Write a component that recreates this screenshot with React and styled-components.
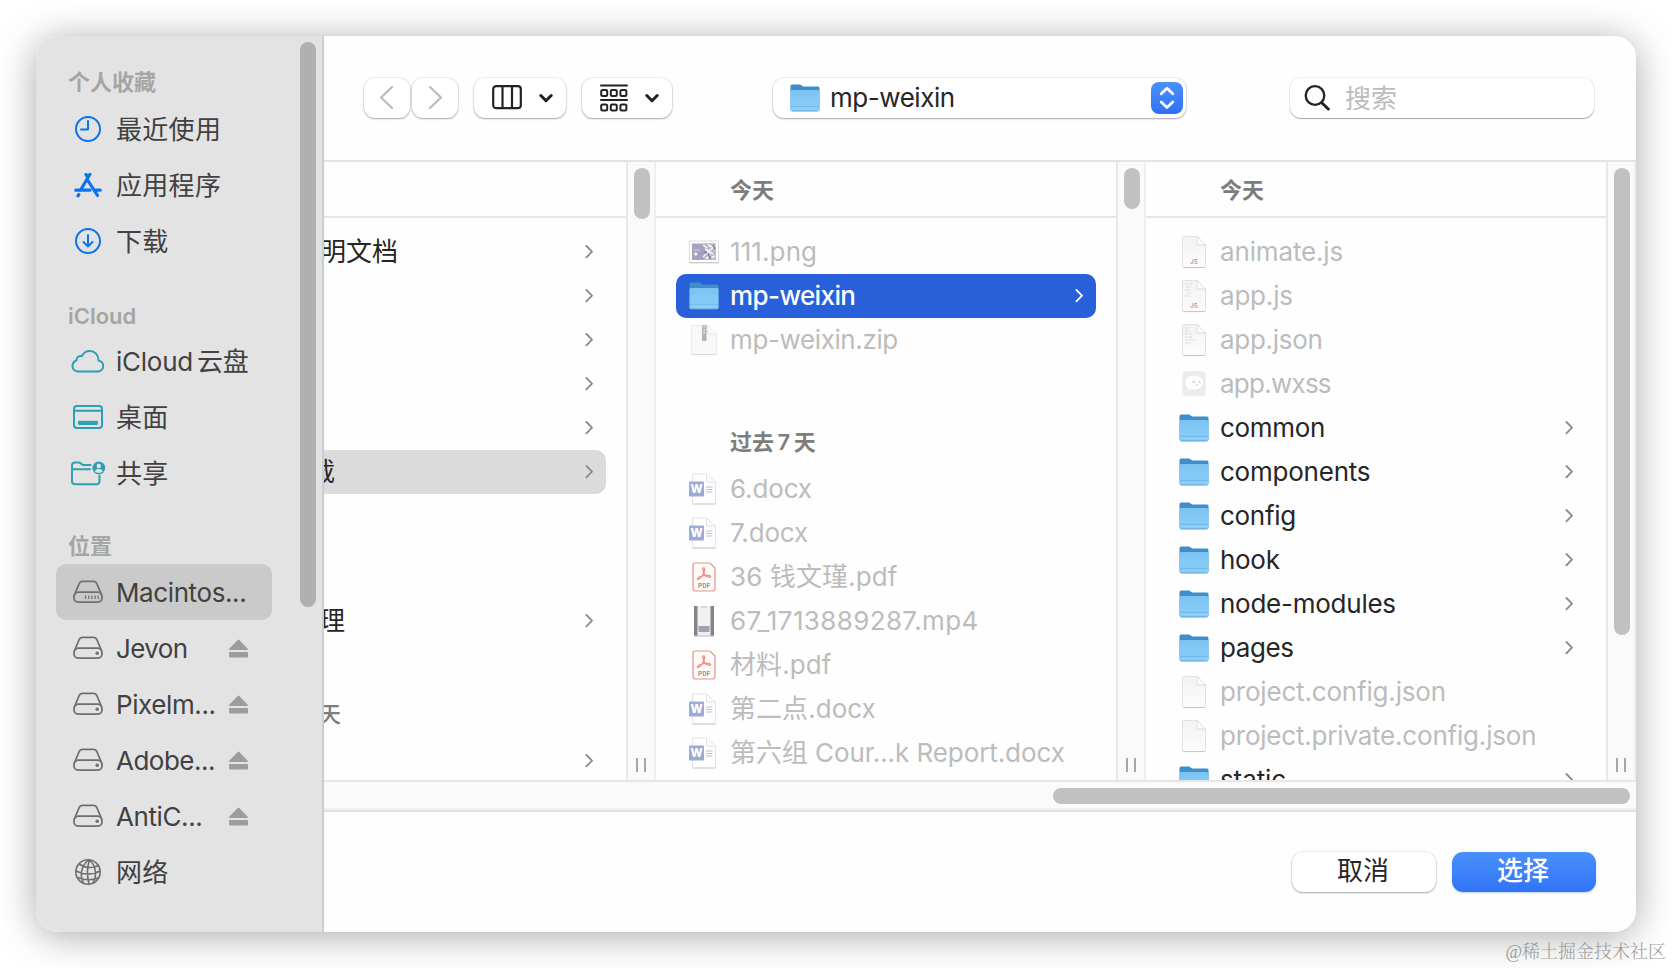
import React from "react";
import styled, { createGlobalStyle, css } from "styled-components";

const GlobalStyle = createGlobalStyle`
  * { box-sizing: border-box; }
  html, body { margin: 0; padding: 0; }
  body {
    width: 1672px;
    height: 968px;
    overflow: hidden;
    background: #fff;
    font-family: Inter, "Noto Sans CJK SC", sans-serif;
    font-size: 26px;
    color: #262626;
  }
  button, input { font: inherit; color: inherit; }
  svg { display: block; flex: none; }
`;

const Page = styled.div`
  position: relative;
  width: 1672px;
  height: 968px;
  padding: 36px;
`;

const Dialog = styled.div`
  display: flex;
  width: 1600px;
  height: 896px;
  border-radius: 22px;
  overflow: hidden;
  background: #fefefe;
`;

const Shadow = styled.div`
  border-radius: 22px;
  box-shadow: 0 4px 38px rgba(0, 0, 0, 0.34);
`;

/* ---------- sidebar ---------- */

const Sidebar = styled.aside`
  display: flex;
  justify-content: space-between;
  width: 288px;
  flex: none;
  background: #e3e3e3;
  border-right: 2px solid #cdcdcd;
`;

const SidebarList = styled.nav`
  width: 236px;
  padding-left: 20px;
`;

const SectionTitle = styled.div`
  display: flex;
  align-items: flex-end;
  height: ${(p) => p.$height}px;
  padding: 0 0 ${(p) => p.$bottom}px 12px;
  font-size: 22px;
  line-height: 30px;
  font-weight: 600;
  color: #a5a5a5;
`;

const SidebarItem = styled.div`
  display: flex;
  align-items: center;
  height: 56px;
  padding: 0 24px 0 14px;
  border-radius: 10px;
  background: ${(p) => (p.$active ? "#cacaca" : "transparent")};
  color: #414141;
`;

const SidebarIcon = styled.span`
  display: flex;
  justify-content: center;
  width: 36px;
  margin-right: 10px;
  flex: none;
`;

const SidebarLabel = styled.span`
  flex: 1;
  padding-top: 2px;
  white-space: nowrap;
  line-height: 36px;
  letter-spacing: ${(p) => p.$track || 0}px;
`;

const Suffix = styled.span`
  margin-left: 4px;
`;

const Thumb = styled.div`
  flex: none;
  width: 16px;
  height: ${(p) => p.$length}px;
  border-radius: 8px;
  background: ${(p) => p.$color || "#c1c1c1"};
`;

const SidebarScroll = styled.div`
  padding: 6px 6px 0 0;
`;

/* ---------- toolbar ---------- */

const Main = styled.main`
  display: flex;
  flex-direction: column;
  flex: 1;
  min-width: 0;
`;

const Toolbar = styled.header`
  display: flex;
  align-items: flex-start;
  height: 124px;
  padding: 42px 0 0 40px;
`;

const raised = css`
  border: none;
  border-radius: 11px;
  background: #fff;
  box-shadow: 0 0 0 1px rgba(0, 0, 0, 0.06), 0 1px 2px rgba(0, 0, 0, 0.3);
`;

const ToolButton = styled.button`
  ${raised}
  display: flex;
  align-items: center;
  justify-content: center;
  gap: 17px;
  width: ${(p) => p.$width}px;
  height: 40px;
  margin-right: ${(p) => p.$gap}px;
  padding: 0 0 0 ${(p) => p.$inset || 0}px;
`;

const PathPopup = styled.div`
  ${raised}
  display: flex;
  align-items: center;
  width: 413px;
  height: 40px;
  margin: 0 104px 0 101px;
  padding: 0 3px 0 17px;
`;

const PathName = styled.span`
  flex: 1;
  margin: -1px 0 0 10px;
  line-height: 36px;
  letter-spacing: -0.45px;
`;

const Stepper = styled.span`
  display: flex;
  align-items: center;
  justify-content: center;
  width: 32px;
  height: 32px;
  border-radius: 8px;
  background: linear-gradient(#4a91fb, #2f70f5);
`;

const SearchField = styled.div`
  ${raised}
  display: flex;
  align-items: center;
  width: 304px;
  height: 40px;
  padding-left: 14px;
  color: #bcbcbc;
  box-shadow: 0 0 0 1px rgba(0, 0, 0, 0.06), 0 1px 1px rgba(0, 0, 0, 0.3);
`;

const SearchHint = styled.span`
  margin-left: 15px;
  padding-top: 2px;
  line-height: 36px;
`;

/* ---------- browser ---------- */

const Browser = styled.section`
  display: flex;
  height: 622px;
  border-top: 2px solid #e3e3e3;
  border-bottom: 2px solid #e6e6e6;
`;

const Column = styled.div`
  width: ${(p) => p.$width}px;
  flex: none;
  height: 618px;
  overflow: hidden;
`;

const ColumnHeader = styled.div`
  height: 56px;
  padding: 13px 0 0 74px;
  margin-bottom: 12px;
  border-bottom: 2px solid #e6e6e6;
  font-size: 22px;
  font-weight: 600;
  line-height: 30px;
  color: #7d7d7d;
`;

const GroupHeader = styled.div`
  height: ${(p) => p.$height}px;
  padding: ${(p) => p.$top}px 0 0 ${(p) => (p.$clipped ? 0 : 74)}px;
  margin-left: ${(p) => (p.$clipped ? -5 : 0)}px;
  font-size: 22px;
  font-weight: ${(p) => (p.$clipped ? 500 : 600)};
  line-height: 30px;
  word-spacing: -2px;
  color: #7d7d7d;
`;

const FileRow = styled.div`
  display: flex;
  align-items: center;
  height: 44px;
  margin: 0 20px;
  padding: 0 13px;
  border-radius: 10px;
  background: ${(p) => (p.$selected ? "#2860d9" : "transparent")};
  color: ${(p) => (p.$selected ? "#fff" : p.$dim ? "#bcbcbc" : "#262626")};
  font-weight: ${(p) => (p.$selected ? 500 : 400)};
`;

const FileIcon = styled.span`
  display: flex;
  justify-content: center;
  width: 30px;
  margin-right: 11px;
  flex: none;
`;

const FileName = styled.span`
  flex: 1;
  white-space: nowrap;
  line-height: 36px;
  letter-spacing: ${(p) => p.$track}px;
`;

const ClippedRow = styled.div`
  display: flex;
  align-items: center;
  height: 44px;
  margin-right: 20px;
  padding-right: 13px;
  border-radius: 0 10px 10px 0;
  background: ${(p) => (p.$selected ? "#dbdbdb" : "transparent")};
`;

const ClippedName = styled.span`
  flex: 1;
  margin-left: ${(p) => p.$shift}px;
  line-height: 36px;
  white-space: nowrap;
`;

const Spacer = styled.div`
  height: ${(p) => p.$height}px;
`;

const Track = styled.div`
  display: flex;
  flex-direction: column;
  align-items: center;
  justify-content: space-between;
  width: 30px;
  flex: none;
  padding: 6px 0 8px 2px;
  background: #fafafa;
  border-left: 2px solid #e8e8e8;
  border-right: 2px solid #efefef;
`;

const Grip = styled.div`
  width: 10px;
  height: 14px;
  margin-right: 2px;
  border: solid #a6a6a6;
  border-width: 0 2px;
`;

const HorizontalTrack = styled.div`
  display: flex;
  justify-content: flex-end;
  height: 30px;
  padding: 6px 6px 0 0;
  background: #fafafa;
  border-bottom: 2px solid #e0e0e0;
  box-shadow: inset 0 -2px 0 #efefef;
`;

const HorizontalThumb = styled.div`
  width: 577px;
  height: 16px;
  border-radius: 8px;
  background: #c1c1c1;
`;

/* ---------- footer ---------- */

const Footer = styled.footer`
  display: flex;
  justify-content: flex-end;
  gap: 16px;
  padding: 40px 40px 0 0;
`;

const FooterButton = styled.button`
  ${raised}
  width: 144px;
  height: 40px;
  padding: 0 2px 2px 0;
  line-height: 36px;
  ${(p) =>
    p.$primary &&
    css`
      background: linear-gradient(#4a90fb, #3074f6);
      box-shadow: 0 1px 2px rgba(48, 116, 246, 0.3);
      color: #fff;
      font-weight: 500;
    `}
`;

const Watermark = styled.div`
  position: absolute;
  right: 6px;
  bottom: 4px;
  font-family: "Liberation Serif", "Noto Serif CJK SC", "Noto Sans CJK SC", serif;
  font-size: 18px;
  font-weight: 300;
  line-height: 24px;
  color: #9b9b9b;
`;

/* ---------- icons ---------- */

const line = { fill: "none", strokeLinecap: "round", strokeLinejoin: "round" };
const BLUE = "#0a74f0";
const TEAL = "#2f9fb3";
const GREY = "#6f6f6f";

const ClockIcon = () => (
  <svg width="28" height="28" viewBox="0 0 28 28" {...line} stroke={BLUE} strokeWidth="2">
    <circle cx="14" cy="14" r="12" />
    <path d="M14 6v8.500H7" />
  </svg>
);
const AppsIcon = () => (
  <svg width="28" height="26" viewBox="0 0 28 26" {...line} stroke={BLUE} strokeWidth="3.200">
    <path d="M15.800 2.500L7.500 16.500M12 2.500l2 3M14.500 9.500l9 14M1.800 18.200H16M21.500 18.200h4.700M4.800 22.500l-.8 1.300" />
  </svg>
);
const DownloadIcon = () => (
  <svg width="28" height="28" viewBox="0 0 28 28" {...line} stroke={BLUE} strokeWidth="2">
    <circle cx="14" cy="14" r="12" />
    <path d="M14 8v11M9.500 15l4.500 4.500 4.500-4.500" />
  </svg>
);
const CloudIcon = () => (
  <svg width="34" height="24" viewBox="0 0 34 24" {...line} stroke={TEAL} strokeWidth="2">
    <path d="M8 22.500h18.200c3.600 0 6-2.400 6-5.400 0-2.900-2-5-4.600-5.600C27.600 6 23.800 2 18.900 2c-3.700 0-6.500 1.900-8 5-3-.6-5.500 1.300-5.500 4.500C3 12.400 1.500 14.400 1.500 17c0 3.100 2.600 5.500 6.500 5.500z" />
  </svg>
);
const DesktopIcon = () => (
  <svg width="32" height="24" viewBox="0 0 32 24" {...line} stroke={TEAL} strokeWidth="2">
    <rect x="2" y="1" width="28" height="22" rx="3" />
    <path d="M2 5.800h28" />
    <rect x="6.500" y="16.300" width="19" height="3.200" rx=".6" fill={TEAL} strokeWidth="1" />
  </svg>
);
const SharedIcon = () => (
  <svg width="36" height="26" viewBox="0 0 36 26" {...line} stroke={TEAL} strokeWidth="2">
    <path d="M20.500 5h-6.800c-2.300 0-2.800-2.500-5-2.500H5C3.200 2.500 2 3.700 2 5.500v15.700c0 1.800 1.200 3 3 3h21.500c1.800 0 3-1.200 3-3v-5.500M2 9.300h18" />
    <circle cx="28.800" cy="8" r="6.400" fill={TEAL} stroke="none" />
    <circle cx="28.800" cy="6" r="2.200" fill="#e3e3e3" stroke="none" />
    <path d="M24.800 11.600c.6-2 2-2.700 4-2.700s3.400.7 4 2.700c-2 1.700-6 1.700-8 0z" fill="#e3e3e3" stroke="none" />
  </svg>
);
const DriveIcon = ({ vents }) => (
  <svg width="32" height="24" viewBox="0 0 32 24" {...line} stroke={GREY} strokeWidth="1.800">
    <path d="M2.400 15L7.200 3.500C7.800 2 8.800 1.400 10.200 1.400h11.600c1.400 0 2.400.6 3 2.100L29.600 15" />
    <rect x="2" y="12.200" width="28" height="10" rx="4.500" />
    {vents ? (
      <path d="M13.500 15.500v3.500M16.700 15.500v3.500M19.900 15.500v3.500M23.100 15.500v3.500M26.200 15.500v3.500" strokeWidth="1.200" strokeLinecap="butt" />
    ) : (
      <circle cx="25.200" cy="17.200" r="1.800" fill={GREY} stroke="none" />
    )}
  </svg>
);
const GlobeIcon = () => (
  <svg width="28" height="28" viewBox="0 0 28 28" {...line} stroke={GREY} strokeWidth="1.600">
    <circle cx="14" cy="14" r="12.200" />
    <path d="M14.500 2C7 8 5.500 18 9.500 25.300M15.500 2c-2.500 7-2.500 16-.5 24M15.500 2c6 5 8 15 3.500 23.300M5 6c6 4 13 4.500 19.500 1.500M2 13c7 3.800 17 4 24 0M3.500 19.500c6 2.500 14 3 20.500.5" />
  </svg>
);
const EjectIcon = () => (
  <svg width="19" height="19" viewBox="0 0 19 19" fill="#9d9d9d">
    <path d="M8.700.900q.8-.8 1.600 0l8.200 8.700q.9 1.400-.7 1.400H1.200Q-.4 11 .5 9.600z" />
    <rect x="0" y="13" width="19" height="5.500" rx="1" />
  </svg>
);

const BackIcon = () => (
  <svg width="16" height="24" viewBox="0 0 16 24" {...line} stroke="#bbb" strokeWidth="2.200">
    <path d="M13 1L2 11.500 13 22" />
  </svg>
);
const ForwardIcon = () => (
  <svg width="16" height="24" viewBox="0 0 16 24" {...line} stroke="#bbb" strokeWidth="2.200">
    <path d="M3 1L14 11.500 3 22" />
  </svg>
);
const DownChevron = () => (
  <svg width="14" height="10" viewBox="0 0 14 10" {...line} stroke="#222" strokeWidth="3">
    <path d="M1.800 2.500L7 7.800l5.200-5.300" />
  </svg>
);
const ColumnsIcon = () => (
  <svg width="30" height="26" viewBox="0 0 30 26" {...line} stroke="#222" strokeWidth="2.200">
    <rect x="1.200" y="1.200" width="27.600" height="22" rx="3" />
    <path d="M10.500 1.500v21.500M20 1.500v21.500" />
  </svg>
);
const GroupIcon = () => (
  <svg width="28" height="28" viewBox="0 0 28 28" {...line} stroke="#222" strokeWidth="2">
    <path d="M1 1.500h26M1 16h26" />
    {[1.2, 10.8, 20.4].map((x) => (
      <g key={x}>
        <rect x={x} y="6" width="6" height="6" rx="1.500" />
        <rect x={x} y="20.500" width="6" height="6" rx="1.500" />
      </g>
    ))}
  </svg>
);
const StepperIcon = () => (
  <svg width="16" height="24" viewBox="0 0 16 24" {...line} stroke="#fff" strokeWidth="2.800">
    <path d="M2.200 7.800L8 2.200l5.800 5.600M2.200 16L8 21.600l5.800-5.600" />
  </svg>
);
const SearchIcon = () => (
  <svg width="26" height="26" viewBox="0 0 26 26" {...line} stroke="#222" strokeWidth="2.300">
    <circle cx="11" cy="10.500" r="9.300" />
    <path d="M18 18l6.300 6" strokeWidth="3" />
  </svg>
);

const RowChevron = ({ color = "#8a8a8a" }) => (
  <svg width="8" height="14" viewBox="0 0 8 14" {...line} stroke={color} strokeWidth="1.800">
    <path d="M1.400 1L7 6.700l-5.600 5.700" />
  </svg>
);

const FolderIcon = () => (
  <svg width="30" height="28" viewBox="0 0 30 28">
    <defs>
      <linearGradient id="folderFront" x1="0" y1="0" x2="0" y2="1">
        <stop offset="0" stopColor="#7cc3f2" />
        <stop offset="1" stopColor="#8bd0fb" />
      </linearGradient>
    </defs>
    <path d="M.5 26V2Q.5.500 2 .5h7.500q1 0 1.900.7l1 .8q.8.600 1.800.6H28q1.500 0 1.500 1.500V26z" fill="#3f8ecb" />
    <path d="M.5 7.500q0-1.500 1.500-1.500h26q1.500 0 1.500 1.500V25.500q0 1.500-1.500 1.500H2q-1.500 0-1.500-1.500z" fill="url(#folderFront)" />
    <path d="M1 22.300h28" stroke="#70b5e4" strokeWidth="1" />
    <path d="M1.500 27h27" stroke="#5f9fca" strokeWidth="1" />
  </svg>
);

const DocumentIcon = ({ label, lines }) => (
  <svg width="26" height="34" viewBox="0 0 26 34">
    <defs>
      <linearGradient id="paper" x1="0" y1="0" x2="0" y2="1">
        <stop offset="0" stopColor="#f3f3f3" />
        <stop offset="1" stopColor="#fcfcfc" />
      </linearGradient>
    </defs>
    <path d="M1.500 3q0-1.500 1.500-1.500h13l8.500 8.500v21.500q0 1-1 1H2.500q-1 0-1-1z" fill="url(#paper)" stroke="#e2e2e2" />
    <path d="M2 32.600h22" stroke="#c6c6c6" />
    <path d="M16 1.500V10h8.500z" fill="#fff" stroke="#dedede" />
    {lines && (
      <path d={lines === "code" ? "M4 5h7M5 8h5M4 11h6M6 14h5M4 17h5" : "M4 5h4M4 8h5M4 11h9M4 14h8M4 17h10M4 20h6"} stroke="#d9d9d9" strokeDasharray="3 1" />
    )}
    {label && (
      <text x="13" y="28.500" textAnchor="middle" fontFamily="Inter, sans-serif" fontSize="6.500" fontWeight="500" fill="#999">
        {label}
      </text>
    )}
  </svg>
);

const WordIcon = () => (
  <svg width="30" height="32" viewBox="0 0 30 32">
    <path d="M3.500 1h14l9 8v22h-23z" fill="#fefefe" stroke="#e4e4e4" />
    <path d="M3.500 31h23" stroke="#d0d0d0" />
    <path d="M17.500 1v8h9" fill="none" stroke="#e2e2e2" />
    <path d="M17 14h6.500M17 16.500h6.500M17 19h6.500" stroke="#a9c4e4" strokeWidth="1.200" />
    <rect x="0" y="8.500" width="15" height="15" rx="1" fill="#9caad8" />
    <text x="7.500" y="20" textAnchor="middle" fontFamily="Inter, sans-serif" fontSize="11.500" fontWeight="800" fill="#fff">
      W
    </text>
  </svg>
);

const PdfIcon = () => (
  <svg width="24" height="30" viewBox="0 0 24 30">
    <path d="M3 1h15l5 5v20.500q0 2.500-2.500 2.500H3.500Q1 29 1 26.500V3q0-2 2-2z" fill="#fffafa" stroke="#e9918b" strokeWidth="1.200" />
    <path
      d="M11.500 5.800c1.800 0 .9 4.400-.8 7.200-1.600 2.700-3.800 4.800-5 4.300-1.300-.8 1.500-2.800 5-3.400 3.300-.7 7.500-.8 8 .5.300 1.500-3.400 1-5.200-.9-1.900-1.800-3.800-7.300-2-7.700z"
      fill="none"
      stroke="#ef8d80"
      strokeWidth="1.300"
    />
    <text x="12" y="26" textAnchor="middle" fontFamily="Roboto, sans-serif" fontSize="6.600" fontWeight="600" fill="#8d9296">
      PDF
    </text>
  </svg>
);

const VideoIcon = () => (
  <svg width="22" height="32" viewBox="0 0 22 32">
    <rect x="1" y="1" width="20" height="30" fill="#f0f0f0" />
    <rect x="1" y="1" width="3.500" height="30" fill="#858585" />
    <rect x="17.500" y="1" width="3.500" height="30" fill="#858585" />
    <path d="M8 1.800h6" stroke="#ccc" strokeWidth="1.500" />
    <rect x="5.500" y="21" width="11" height="6" fill="#9ea3b4" />
    <path d="M1 31h20" stroke="#bcbcbc" />
  </svg>
);

const PictureIcon = () => (
  <svg width="30" height="24" viewBox="0 0 30 24">
    <rect x=".5" y="1" width="29" height="21.500" fill="#fff" stroke="#dcdcdc" />
    <path d="M.5 22.800h29" stroke="#c4c4c4" />
    <rect x="3" y="3.500" width="24" height="16.500" fill="#a6a1bf" />
    <path d="M13 3.500l5 7-4 9.500h13v-16.500z" fill="#bdbccb" />
    <path d="M14 5l4 3M19 5l4 2M16 9l8 5M20 11l6-5M14 17l5-5M17 19l4-4M22 18l4-2" stroke="#f4f4f8" strokeWidth="1.500" />
    <path d="M19 14l3 5M24 5l2 4M15 12l3 1" stroke="#817c9c" strokeWidth="1.500" />
    <circle cx="6.800" cy="14" r="1.600" fill="#fff" />
    <path d="M5 10h6" stroke="#d6d3e2" strokeWidth="1.200" />
  </svg>
);

const ZipIcon = () => (
  <svg width="28" height="32" viewBox="0 0 28 32">
    <path d="M1.500 2.500q0-1 1-1h15l9 8.500v19.500q0 1-1 1h-23q-1 0-1-1z" fill="#f8f8f8" stroke="#ebebeb" />
    <path d="M17.500 1v9h9.500V1z" fill="#fefefe" />
    <path d="M17.500 1.500V10h9z" fill="#fff" stroke="#e6e6e6" />
    <path d="M2 30.600h24" stroke="#dadada" />
    <rect x="12" y="1" width="4.500" height="16" rx="1" fill="#b3b3b3" />
    <path d="M14.200 2v8" stroke="#eee" strokeWidth="1.500" strokeDasharray="1.500 1.500" />
  </svg>
);

const WxssIcon = () => (
  <svg width="24" height="26" viewBox="0 0 24 26">
    <rect x=".5" y=".5" width="23" height="24.500" rx="4" fill="#ececec" stroke="#f2f2f2" />
    <path d="M12 4.500c5 0 8.800 3 8.800 7s-3.800 7-8.800 7c-1 0-2-.1-2.900-.4L5.500 20l.8-3.200C4.300 15.500 3.200 13.600 3.200 11.500c0-4 3.800-7 8.800-7z" fill="#fff" />
    <path d="M10.500 11.500q1.200-2 2.600 0M16.500 10.500l2 1M13.800 14.300h2" stroke="#9fcfc0" strokeWidth="1.100" fill="none" />
  </svg>
);

/* ---------- data ---------- */

const sections = [
  {
    title: "个人收藏",
    height: 65,
    bottom: 4,
    items: [
      { label: "最近使用", icon: <ClockIcon />, track: 0.3 },
      { label: "应用程序", icon: <AppsIcon />, track: 0.3 },
      { label: "下载", icon: <DownloadIcon />, track: 0.3 },
    ],
  },
  {
    title: "iCloud",
    height: 64,
    bottom: 2,
    items: [
      { label: "iCloud", suffix: "云盘", icon: <CloudIcon />, track: -0.25 },
      { label: "桌面", icon: <DesktopIcon />, track: 0.3 },
      { label: "共享", icon: <SharedIcon />, track: 0.3 },
    ],
  },
  {
    title: "位置",
    height: 63,
    bottom: 3,
    items: [
      { label: "Macintos...", icon: <DriveIcon vents />, active: true, track: -0.4 },
      { label: "Jevon", icon: <DriveIcon />, eject: true, track: -0.6 },
      { label: "Pixelm...", icon: <DriveIcon />, eject: true, track: -0.4 },
      { label: "Adobe...", icon: <DriveIcon />, eject: true, track: -0.5 },
      { label: "AntiC...", icon: <DriveIcon />, eject: true, track: -0.4 },
      { label: "网络", icon: <GlobeIcon />, track: 0.3 },
    ],
  },
];

const today = [
  { name: "111.png", icon: <PictureIcon />, dim: true, track: 0.1 },
  { name: "mp-weixin", icon: <FolderIcon />, folder: true, selected: true, track: -0.6 },
  { name: "mp-weixin.zip", icon: <ZipIcon />, dim: true, track: -0.38 },
];

const lastWeek = [
  { name: "6.docx", icon: <WordIcon />, dim: true, track: -0.15 },
  { name: "7.docx", icon: <WordIcon />, dim: true, track: -0.15 },
  { name: "36 钱文瑾.pdf", icon: <PdfIcon />, dim: true, track: 0.1 },
  { name: "67_1713889287.mp4", icon: <VideoIcon />, dim: true, track: 0.37 },
  { name: "材料.pdf", icon: <PdfIcon />, dim: true, track: 0.1 },
  { name: "第二点.docx", icon: <WordIcon />, dim: true, track: 0.05 },
  { name: "第六组 Cour...k Report.docx", icon: <WordIcon />, dim: true, track: -0.08 },
];

const project = [
  { name: "animate.js", icon: <DocumentIcon label="JS" />, dim: true, track: -0.15 },
  { name: "app.js", icon: <DocumentIcon label="JS" lines="code" />, dim: true, track: -0.2 },
  { name: "app.json", icon: <DocumentIcon lines="text" />, dim: true, track: -0.3 },
  { name: "app.wxss", icon: <WxssIcon />, dim: true, track: -0.75 },
  { name: "common", icon: <FolderIcon />, folder: true, track: -0.3 },
  { name: "components", icon: <FolderIcon />, folder: true, track: -0.23 },
  { name: "config", icon: <FolderIcon />, folder: true, track: -0.3 },
  { name: "hook", icon: <FolderIcon />, folder: true, track: -0.3 },
  { name: "node-modules", icon: <FolderIcon />, folder: true, track: -0.25 },
  { name: "pages", icon: <FolderIcon />, folder: true, track: -0.4 },
  { name: "project.config.json", icon: <DocumentIcon />, dim: true, track: -0.18 },
  { name: "project.private.config.json", icon: <DocumentIcon />, dim: true, track: -0.2 },
  { name: "static", icon: <FolderIcon />, folder: true, track: -0.1 },
];

const Files = ({ items }) =>
  items.map((f) => (
    <FileRow key={f.name} $selected={f.selected} $dim={f.dim}>
      <FileIcon>{f.icon}</FileIcon>
      <FileName $track={f.track}>{f.name}</FileName>
      {f.folder && <RowChevron color={f.selected ? "#fff" : undefined} />}
    </FileRow>
  ));

const ParentRow = ({ name, shift = 0, selected }) => (
  <ClippedRow $selected={selected}>
    <ClippedName $shift={shift}>{name}</ClippedName>
    <RowChevron />
  </ClippedRow>
);

const ScrollTrack = ({ length }) => (
  <Track>
    <Thumb $length={length} />
    <Grip />
  </Track>
);

export default function App() {
  return (
    <Page>
      <GlobalStyle />
      <Shadow>
        <Dialog>
          <Sidebar>
            <SidebarList>
              {sections.map((s) => (
                <React.Fragment key={s.title}>
                  <SectionTitle $height={s.height} $bottom={s.bottom}>
                    {s.title}
                  </SectionTitle>
                  {s.items.map((it) => (
                    <SidebarItem key={it.label} $active={it.active}>
                      <SidebarIcon>{it.icon}</SidebarIcon>
                      <SidebarLabel $track={it.track}>
                        {it.label}
                        {it.suffix && <Suffix>{it.suffix}</Suffix>}
                      </SidebarLabel>
                      {it.eject && <EjectIcon />}
                    </SidebarItem>
                  ))}
                </React.Fragment>
              ))}
            </SidebarList>
            <SidebarScroll>
              <Thumb $length={565} $color="#b0b0b0" />
            </SidebarScroll>
          </Sidebar>

          <Main>
            <Toolbar>
              <ToolButton $width={46} $gap={2}>
                <BackIcon />
              </ToolButton>
              <ToolButton $width={46} $gap={16}>
                <ForwardIcon />
              </ToolButton>
              <ToolButton $width={92} $gap={16} $inset={5}>
                <ColumnsIcon />
                <DownChevron />
              </ToolButton>
              <ToolButton $width={90} $gap={0} $inset={5}>
                <GroupIcon />
                <DownChevron />
              </ToolButton>
              <PathPopup>
                <FolderIcon />
                <PathName>mp-weixin</PathName>
                <Stepper>
                  <StepperIcon />
                </Stepper>
              </PathPopup>
              <SearchField>
                <SearchIcon />
                <SearchHint>搜索</SearchHint>
              </SearchField>
            </Toolbar>

            <Browser>
              <Column $width={302}>
                <ColumnHeader />
                <ParentRow name="明文档" shift={-4} />
                <ParentRow />
                <ParentRow />
                <ParentRow />
                <ParentRow />
                <ParentRow name="载" shift={-15} selected />
                <Spacer $height={105} />
                <ParentRow name="理" shift={-5} />
                <GroupHeader $height={96} $top={56} $clipped>
                  天
                </GroupHeader>
                <ParentRow />
              </Column>
              <ScrollTrack length={51} />
              <Column $width={460}>
                <ColumnHeader>今天</ColumnHeader>
                <Files items={today} />
                <GroupHeader $height={105} $top={65}>
                  过去 7 天
                </GroupHeader>
                <Files items={lastWeek} />
              </Column>
              <ScrollTrack length={41} />
              <Column $width={460}>
                <ColumnHeader>今天</ColumnHeader>
                <Files items={project} />
              </Column>
              <ScrollTrack length={467} />
            </Browser>
            <HorizontalTrack>
              <HorizontalThumb />
            </HorizontalTrack>

            <Footer>
              <FooterButton>取消</FooterButton>
              <FooterButton $primary>选择</FooterButton>
            </Footer>
          </Main>
        </Dialog>
      </Shadow>
      <Watermark>@稀土掘金技术社区</Watermark>
    </Page>
  );
}
